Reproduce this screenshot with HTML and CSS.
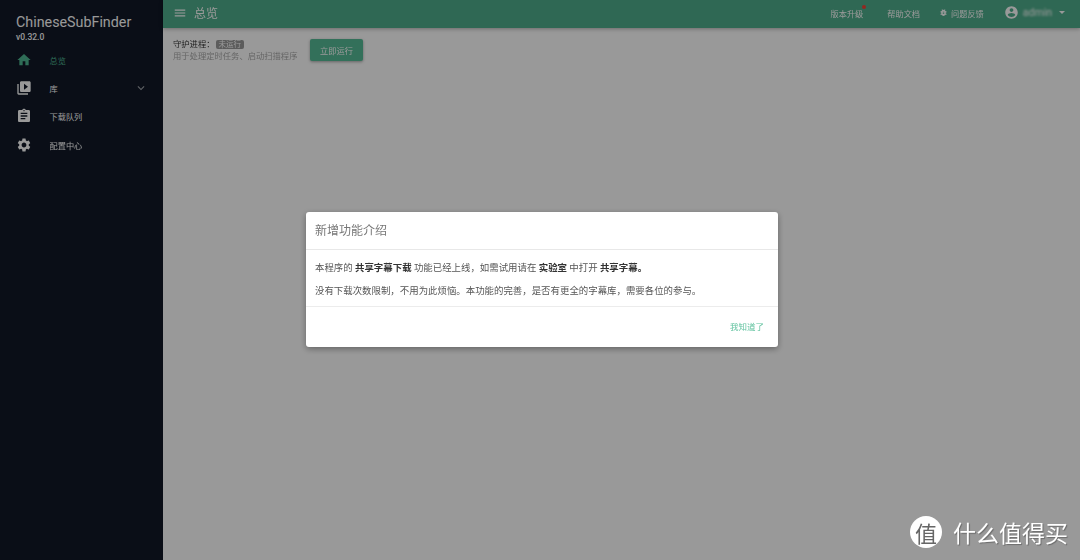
FILE: index.html
```html
<!DOCTYPE html>
<html lang="zh-CN">
<head>
    <meta charset="UTF-8">
    <title>ChineseSubFinder</title>
    <link rel="stylesheet" href="styles.css">
</head>
<body>
    <div class="layout">
        <aside class="sidebar">
            <div class="brand">
                <div class="brand-name">ChineseSubFinder</div>
                <div class="brand-version">v0.32.0</div>
            </div>
            <nav class="menu">
                <a class="menu-item active">
                    <svg class="menu-icon" viewBox="0 0 24 24"><path d="M10 20v-6h4v6h5v-8h3L12 3 2 12h3v8z"/></svg>
                    <span>总览</span>
                </a>
                <a class="menu-item">
                    <svg class="menu-icon" viewBox="0 0 24 24"><path d="M4 6H2v14c0 1.100.9 2 2 2h14v-2H4V6zm16-4H8c-1.100 0-2 .9-2 2v12c0 1.100.9 2 2 2h12c1.100 0 2-.9 2-2V4c0-1.100-.9-2-2-2zm-8 12.500v-9l6 4.500-6 4.500z"/></svg>
                    <span>库</span>
                    <svg class="menu-arrow" viewBox="0 0 24 24"><path d="M7.400 8.600 12 13.200l4.600-4.600L18 10l-6 6-6-6z"/></svg>
                </a>
                <a class="menu-item">
                    <svg class="menu-icon" viewBox="0 0 24 24"><path d="M19 3h-4.180C14.400 1.840 13.300 1 12 1s-2.400.84-2.820 2H5c-1.100 0-2 .9-2 2v14c0 1.100.9 2 2 2h14c1.100 0 2-.9 2-2V5c0-1.100-.9-2-2-2zm-7 0c.55 0 1 .45 1 1s-.45 1-1 1-1-.45-1-1 .45-1 1-1zm2 14H7v-2h7v2zm3-4H7v-2h10v2zm0-4H7V7h10v2z"/></svg>
                    <span>下载队列</span>
                </a>
                <a class="menu-item">
                    <svg class="menu-icon" viewBox="0 0 24 24"><path d="M19.140 12.940c.04-.3.06-.61.06-.94 0-.32-.02-.64-.07-.94l2.030-1.580a.49.49 0 0 0 .12-.61l-1.920-3.320a.488.488 0 0 0-.59-.22l-2.390.96c-.5-.38-1.030-.7-1.620-.94l-.36-2.540a.484.484 0 0 0-.48-.41h-3.840c-.24 0-.43.17-.47.41l-.36 2.540c-.59.24-1.130.57-1.620.94l-2.390-.96c-.22-.08-.47 0-.59.22L2.740 8.870c-.12.21-.08.47.12.61l2.030 1.580c-.05.3-.09.63-.09.94s.02.64.07.94l-2.030 1.580a.49.49 0 0 0-.12.61l1.920 3.320c.12.22.37.29.59.22l2.390-.96c.5.38 1.030.7 1.620.94l.36 2.540c.05.24.24.41.48.41h3.840c.24 0 .44-.17.47-.41l.36-2.540c.59-.24 1.130-.56 1.620-.94l2.390.96c.22.08.47 0 .59-.22l1.920-3.320c.12-.22.07-.47-.12-.61l-2.010-1.580zM12 15.600c-1.980 0-3.600-1.620-3.600-3.600s1.620-3.600 3.600-3.600 3.600 1.620 3.600 3.600-1.620 3.600-3.600 3.600z"/></svg>
                    <span>配置中心</span>
                </a>
            </nav>
        </aside>

        <div class="main">
            <header class="topbar">
                <svg class="burger" viewBox="0 0 24 24"><path d="M3 18h18v-2H3v2zm0-5h18v-2H3v2zm0-7v2h18V6H3z"/></svg>
                <div class="page-title">总览</div>
                <div class="top-actions">
                    <a class="top-link upgrade">版本升级<i class="red-dot"></i></a>
                    <a class="top-link help">帮助文档</a>
                    <a class="top-link">
                        <svg class="bug-icon" viewBox="0 0 24 24"><path d="M20 8h-2.810a5.985 5.985 0 0 0-1.820-1.960L17 4.410 15.590 3l-2.170 2.170a6 6 0 0 0-2.830 0L8.410 3 7 4.410l1.620 1.630C7.880 6.550 7.260 7.220 6.810 8H4v2h2.090c-.05.33-.09.66-.09 1v1H4v2h2v1c0 .34.04.67.09 1H4v2h2.810c1.040 1.790 2.970 3 5.190 3s4.150-1.210 5.190-3H20v-2h-2.090c.05-.33.09-.66.09-1v-1h2v-2h-2v-1c0-.34-.04-.67-.09-1H20V8zm-6 8h-4v-2h4v2zm0-4h-4v-2h4v2z"/></svg>
                        问题反馈
                    </a>
                    <div class="user">
                        <svg class="user-icon" viewBox="0 0 24 24"><path d="M12 2C6.480 2 2 6.480 2 12s4.480 10 10 10 10-4.480 10-10S17.520 2 12 2zm0 3c1.660 0 3 1.340 3 3s-1.340 3-3 3-3-1.340-3-3 1.340-3 3-3zm0 14.200c-2.500 0-4.710-1.280-6-3.220.03-1.990 4-3.080 6-3.080s5.970 1.090 6 3.080c-1.290 1.940-3.500 3.220-6 3.220z"/></svg>
                        <span class="user-name">admin</span>
                        <i class="caret"></i>
                    </div>
                </div>
            </header>

            <section class="content">
                <div class="daemon">
                    <div class="daemon-title">守护进程： <span class="badge">未运行</span></div>
                    <div class="daemon-desc">用于处理定时任务、启动扫描程序</div>
                </div>
                <button class="run-btn">立即运行</button>
            </section>
        </div>
    </div>

    <div class="overlay">
        <div class="dialog">
            <div class="dialog-title">新增功能介绍</div>
            <div class="dialog-body">
                <p>本程序的 <strong>共享字幕下载</strong> 功能已经上线，如需试用请在 <strong>实验室</strong> 中打开 <strong>共享字幕。</strong></p>
                <p>没有下载次数限制，不用为此烦恼。本功能的完善，是否有更全的字幕库，需要各位的参与。</p>
            </div>
            <div class="dialog-actions">
                <a class="dialog-ok">我知道了</a>
            </div>
        </div>
    </div>

    <div class="watermark">
        <span class="watermark-logo">值</span>
        <span class="watermark-text">什么值得买</span>
    </div>
</body>
</html>
```

FILE: styles.css
```css
* {
    box-sizing: border-box;
}

html, body {
    height: 100%;
}

body {
    margin: 0;
    overflow: hidden;
    font-family: Roboto, "Noto Sans CJK SC", sans-serif;
    background-color: #fff;
    color: #333;
}

.layout {
    display: flex;
    height: 100%;
    filter: blur(0.4px);
}

.sidebar {
    width: 163px;
    flex-shrink: 0;
    background-color: #111827;
    color: #fff;
}

.brand {
    padding: 13px 0 0 16px;
    height: 45.500px;
}

.brand-name {
    font-size: 14.300px;
    line-height: 18px;
    color: #fff;
}

.brand-version {
    font-size: 8.500px;
    line-height: 10px;
    margin-top: 1px;
    font-weight: 500;
    color: #fff;
}

.menu-item {
    display: flex;
    align-items: center;
    height: 28.300px;
    padding: 0 16px;
    font-size: 8.200px;
    color: #fff;
}

.menu-item.active {
    color: #4fb691;
}

.menu-icon {
    width: 16px;
    height: 16px;
    margin-right: 17.500px;
    fill: currentColor;
    flex-shrink: 0;
}

.menu-arrow {
    width: 14px;
    height: 14px;
    margin-left: auto;
    margin-right: -1px;
    fill: rgba(255, 255, 255, 0.6);
}

.main {
    flex: 1;
    min-width: 0;
}

.topbar {
    display: flex;
    align-items: center;
    height: 28px;
    padding: 0 15px 3px 10px;
    background-color: #4fae8c;
    color: #fff;
    box-shadow: 0 1px 4px rgba(0, 0, 0, 0.3);
}

.burger {
    width: 14px;
    height: 14px;
    fill: #fff;
}

.page-title {
    margin-left: 7px;
    font-size: 12px;
}

.top-actions {
    display: flex;
    align-items: center;
    margin-left: auto;
    font-size: 8.200px;
}

.top-link {
    position: relative;
    display: flex;
    align-items: center;
    margin-right: 20px;
}

.top-link.upgrade {
    margin-right: 24px;
}

.top-link.help {
    margin-right: 19px;
}

.bug-icon {
    width: 9px;
    height: 9px;
    margin-right: 3px;
    fill: #fff;
    flex-shrink: 0;
}

.red-dot {
    position: absolute;
    top: -2px;
    right: -3px;
    width: 4px;
    height: 4px;
    border-radius: 50%;
    background-color: #f44336;
}

.user {
    display: flex;
    align-items: center;
}

.user-icon {
    width: 15px;
    height: 15px;
    fill: #fff;
}

.user-name {
    margin-left: 4px;
    font-size: 10.500px;
    filter: blur(1px);
}

.caret {
    margin-left: 7px;
    border-left: 3px solid transparent;
    border-right: 3px solid transparent;
    border-top: 3px solid #fff;
}

.content {
    display: flex;
    align-items: flex-start;
    padding: 11px 10px;
}

.daemon {
    width: 137px;
}

.daemon-title {
    font-size: 8.300px;
    line-height: 12px;
    margin-top: -1px;
    color: #333;
}

.badge {
    display: inline-block;
    padding: 0 3px;
    margin-left: -1px;
    border-radius: 2px;
    line-height: 9px;
    font-size: 7.500px;
    background-color: #9a9a9a;
    color: #fff;
}

.daemon-desc {
    font-size: 8.300px;
    line-height: 13px;
    color: #aaa;
}

.run-btn {
    height: 22px;
    width: 53px;
    padding: 0;
    border: none;
    border-radius: 2px;
    font-family: inherit;
    font-size: 8.200px;
    background-color: #55bb96;
    color: #fff;
    box-shadow: 0 1px 3px rgba(0, 0, 0, 0.35);
}

.overlay {
    position: fixed;
    inset: 0;
    display: flex;
    align-items: flex-start;
    justify-content: center;
    padding: 212px 0 0 4px;
    background-color: rgba(0, 0, 0, 0.4);
}

.dialog {
    width: 472px;
    height: 135px;
    background-color: #fff;
    border-radius: 3px;
    box-shadow: 0 2px 6px rgba(0, 0, 0, 0.35);
    filter: blur(0.3px);
}

.dialog-title {
    height: 38px;
    padding: 11px 9px 0;
    font-size: 12px;
    line-height: 17px;
    color: #777;
    border-bottom: 1px solid #e8e8e8;
}

.dialog-body {
    height: 57px;
    padding: 10.500px 9px 0;
    font-size: 9.430px;
    color: #555;
    border-bottom: 1px solid #ececec;
}

.dialog-body p {
    margin: 0 0 10px;
    line-height: 13px;
}

.dialog-body strong {
    font-weight: 700;
    color: #333;
}

.dialog-actions {
    display: flex;
    justify-content: flex-end;
    padding: 12.500px 14px 0;
}

.dialog-ok {
    font-size: 8.500px;
    color: #62c3a0;
}

.watermark {
    position: fixed;
    right: 12px;
    bottom: 11px;
    display: flex;
    align-items: center;
    color: #fff;
}

.watermark-logo {
    display: flex;
    align-items: center;
    justify-content: center;
    width: 32px;
    height: 32px;
    border-radius: 50%;
    background-color: #fff;
    color: #666;
    font-size: 22px;
}

.watermark-text {
    margin-left: 11px;
    font-size: 23px;
    text-shadow: 1px 1px 1px rgba(0, 0, 0, 0.3);
}
```
